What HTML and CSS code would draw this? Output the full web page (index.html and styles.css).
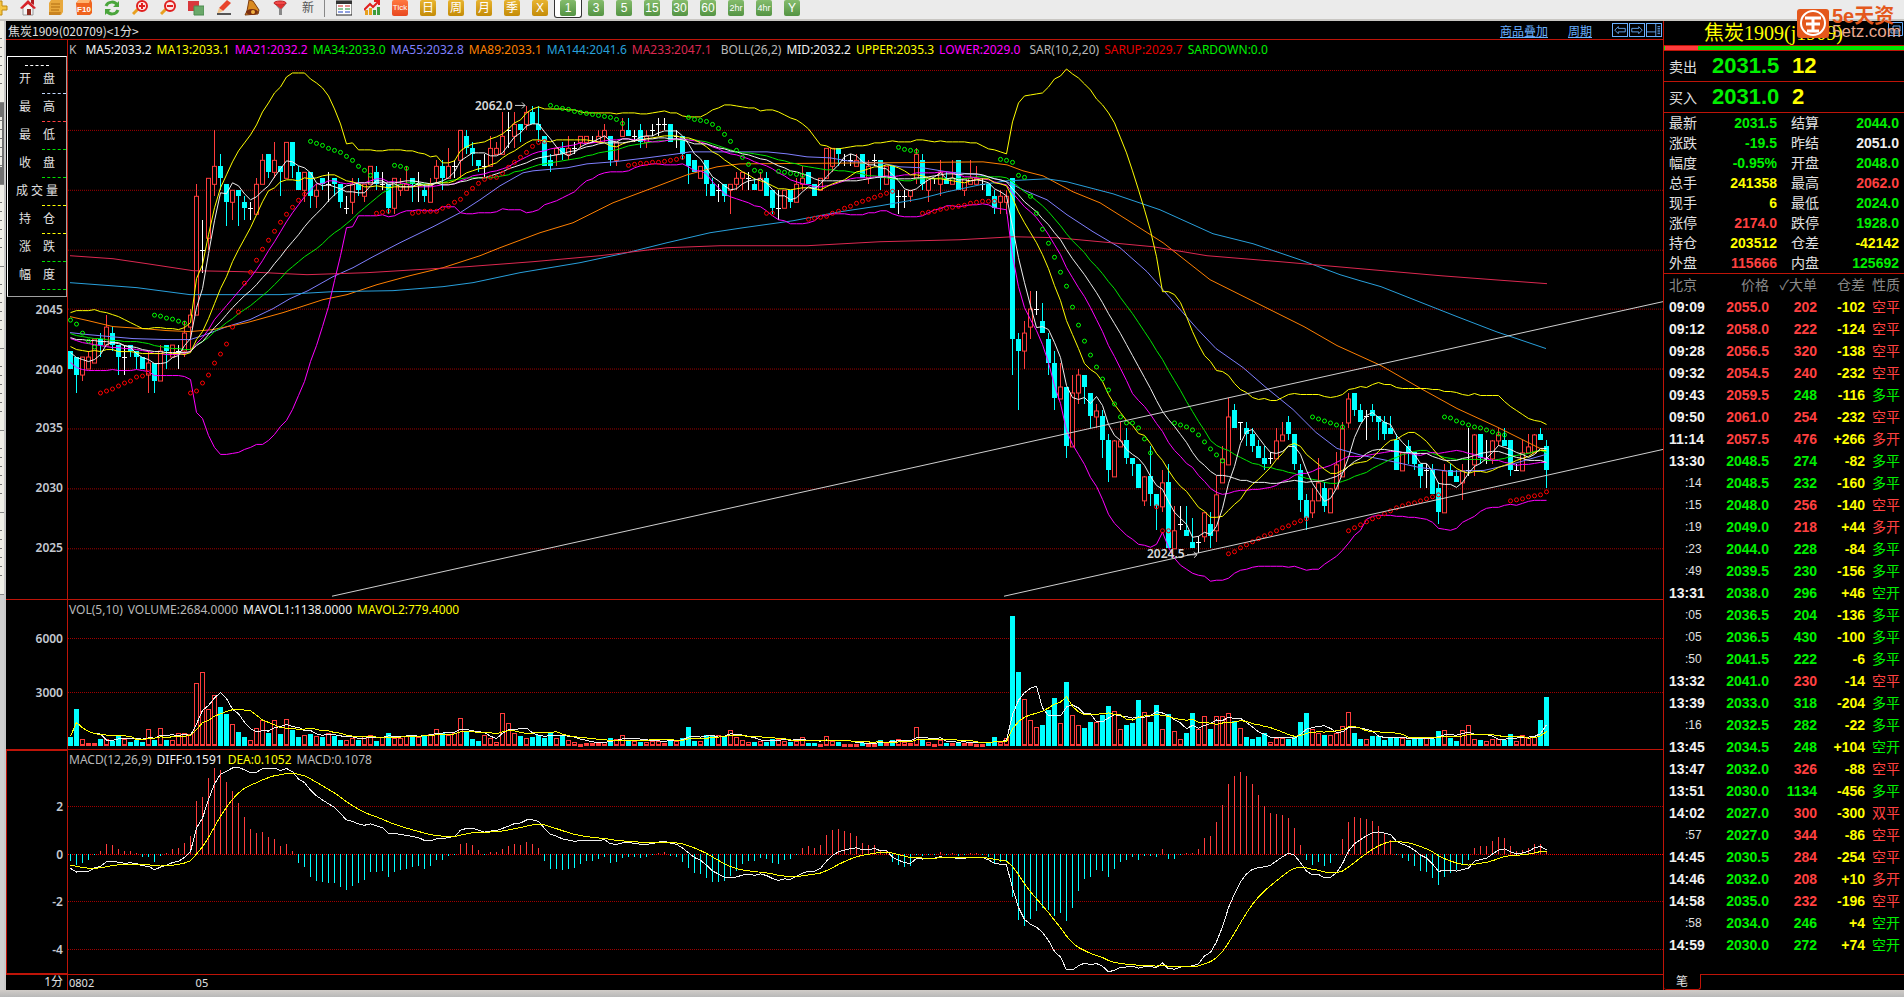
FILE: index.html
```html
<!DOCTYPE html>
<html lang="zh-CN">
<head>
<meta charset="utf-8">
<title>焦炭1909</title>
<link rel="stylesheet" href="styles.css">
</head>

<body>
<div class="toolbar">
  <button aria-label="新增"><svg viewBox="0 0 16 16"><path d="M6 1h4v5h5v4h-5v5H6v-5H1V6h5z" fill="#f5c542" stroke="#c08a10"/></svg></button>
  <button aria-label="首页"><svg viewBox="0 0 16 16"><path d="M3 8v7h10V8L8 3z" fill="#f4f4f4" stroke="#999"/><path d="M0 8l8-8 8 8-2 1-6-5-6 5z" fill="#d8232a"/><path d="M11 0h3v5l-3-2z" fill="#b01c20"/><path d="M7 9h4v6H7z" fill="#8c2b20"/></svg></button>
  <button aria-label="公告"><svg viewBox="0 0 16 16"><path d="M3 0h12v12l-2 3H1V3z" fill="#e8a83c"/><path d="M3 4h9M3 7h9M3 10h8" stroke="#b06c10"/><path d="M1 12h12l-1 3H1z" fill="#c98422"/></svg></button>
  <button aria-label="F10"><svg viewBox="0 0 16 16"><path d="M0 3l3-3h12l1 3v10l-2 2H1z" fill="#f0641e"/><path d="M2 0h12l-1 3H1z" fill="#ffb46e"/><text x="8" y="12" class="f10">F10</text></svg></button>
  <button aria-label="刷新"><svg viewBox="0 0 16 16"><path d="M2 6c2-5 9-5 11-1M14 10c-2 5-9 5-11 1" fill="none" stroke="#4aa53c" stroke-width="3"/><path d="M15 1v6H9zM1 15V9h6z" fill="#4aa53c"/></svg></button>
  <button aria-label="放大"><svg viewBox="0 0 16 16"><path d="M6 9l-5 5" stroke="#e8a020" stroke-width="3"/><circle cx="10" cy="6" r="5" fill="#fde6e6" stroke="#e02020" stroke-width="2"/><path d="M7 6h6M10 3v6" stroke="#e02020" stroke-width="2"/></svg></button>
  <button aria-label="缩小"><svg viewBox="0 0 16 16"><path d="M6 9l-5 5" stroke="#e8a020" stroke-width="3"/><circle cx="10" cy="6" r="5" fill="#fde6e6" stroke="#e02020" stroke-width="2"/><path d="M7 6h6" stroke="#e02020" stroke-width="2"/></svg></button>
  <button aria-label="叠加"><svg viewBox="0 0 16 16"><path d="M0 1h11v10H0z" fill="#d8383c"/><path d="M6 6h10v9H6z" fill="#6aa86a" stroke="#4c8c50"/></svg></button>
  <button aria-label="画线"><svg viewBox="0 0 16 16"><path d="M11 0l4 3-8 8-4-3z" fill="#e8442c"/><path d="M3 8l4 3-6 3z" fill="#f2c48a"/><path d="M1 14h14" stroke="#555" stroke-width="2"/></svg></button>
  <button aria-label="预警"><svg viewBox="0 0 16 16"><path d="M5 0l4 1 6 9-1 4-13 1 2-4z" fill="#d98a20" stroke="#7c3c10"/><ellipse cx="8" cy="12" rx="6" ry="3" fill="#7c3010"/><circle cx="9" cy="12" r="2" fill="#f0b040"/></svg></button>
  <button aria-label="过滤"><svg viewBox="0 0 16 16"><path d="M2 3l5 6v6h3V9l5-6z" fill="#888"/><ellipse cx="8" cy="3" rx="6" ry="2" fill="#f04848" stroke="#c02020"/><path d="M4 5h9L9 9z" fill="#e03030"/></svg></button>
  <button class="new">新</button>
  <i class="split"></i>
  <button aria-label="报价"><svg viewBox="0 0 16 16"><path d="M0 1h16v14H0z" fill="#fff" stroke="#222"/><path d="M0 1h16v3H0z" fill="#333"/><path d="M2 6h5M9 6h5" stroke="#d02020"/><path d="M2 9h5M9 9h5" stroke="#1c8c30"/><path d="M2 12h5M9 12h5" stroke="#2040c0"/></svg></button>
  <button aria-label="走势"><svg viewBox="0 0 16 16"><path d="M1 10h3v5H1zM5 8h3v7H5z" fill="#e8a020"/><path d="M9 10h3v5H9zM13 7h3v8h-3z" fill="#3c9c3c"/><path d="M0 10l6-6 3 3 6-6M10 1h5v4" fill="none" stroke="#e02020" stroke-width="2"/></svg></button>
  <button><b class="tick">Tick</b></button>
  <button><b class="gold">日</b></button>
  <button><b class="gold">周</b></button>
  <button><b class="gold">月</b></button>
  <button><b class="gold">季</b></button>
  <button><b class="gold">X</b></button>
  <button class="on"><b>1</b></button>
  <button><b>3</b></button>
  <button><b>5</b></button>
  <button><b>15</b></button>
  <button><b>30</b></button>
  <button><b>60</b></button>
  <button><b class="hr">2hr</b></button>
  <button><b class="hr">4hr</b></button>
  <button><b>Y</b></button>
</div>

<div class="work">
  <div class="strip"><i></i><i class="cur"></i><i></i><i></i><i></i><i></i><i></i></div>

  <div class="charts">
    <div class="title">
      <span class="name">焦炭1909(020709)&lt;1分&gt;</span>
      <a href="#">商品叠加</a>
      <a href="#">周期</a>
      <div class="arrows">
        <button aria-label="向左"><svg viewBox="0 0 16 14"><path d="M2 7l4-4v2h8v4H6v2z"/></svg></button>
        <button aria-label="向右"><svg viewBox="0 0 16 14"><path d="M14 7l-4-4v2H2v4h8v2z"/></svg></button>
        <button aria-label="布局"><svg viewBox="0 0 16 14"><path d="M0 9h10M10 0v14M12 3h3M12 5h3M12 7h3M12 9h3M12 11h3"/></svg></button>
      </div>
    </div>

    <div class="pane main">
      <div class="axis">
        <svg id="axisK"></svg>
        <div class="info">
          <p class="top"><u class="w"></u></p>
          <p>开　盘<u class="b"></u></p>
          <p>最　高<u class="r"></u></p>
          <p>最　低<u class="g"></u></p>
          <p>收　盘<u class="g"></u></p>
          <p>成 交 量<u class="y"></u></p>
          <p>持　仓<u class="y"></u></p>
          <p>涨　跌<u class="g"></u></p>
          <p>幅　度<u class="g"></u></p>
        </div>
      </div>
      <div class="plot">
        <div class="legend">
          <span class="gray k">K</span><span class="white">MA5:2033.2</span><span class="yellow">MA13:2033.1</span><span class="magenta">MA21:2032.2</span><span class="green">MA34:2033.0</span><span class="violet">MA55:2032.8</span><span class="orange">MA89:2033.1</span><span class="blue">MA144:2041.6</span><span class="crimson">MA233:2047.1</span>
          <span class="gray group">BOLL(26,2)</span><span class="white">MID:2032.2</span><span class="yellow">UPPER:2035.3</span><span class="magenta">LOWER:2029.0</span>
          <span class="gray group">SAR(10,2,20)</span><span class="red">SARUP:2029.7</span><span class="green">SARDOWN:0.0</span>
        </div>
        <svg id="plotK" viewBox="68 60 1595 540" preserveAspectRatio="none"></svg>
      </div>
    </div>

    <div class="pane vol">
      <div class="axis"><svg id="axisV"></svg></div>
      <div class="plot">
        <div class="legend"><span class="gray">VOL(5,10)</span><span class="gray">VOLUME:2684.0000</span><span class="white">MAVOL1:1138.0000</span><span class="yellow">MAVOL2:779.4000</span></div>
        <svg id="plotV" viewBox="68 621 1595 128" preserveAspectRatio="none"></svg>
      </div>
    </div>

    <div class="pane macd">
      <div class="axis"><svg id="axisM"></svg></div>
      <div class="plot">
        <div class="legend"><span class="gray">MACD(12,26,9)</span><span class="white">DIFF:0.1591</span><span class="yellow">DEA:0.1052</span><span class="gray">MACD:0.1078</span></div>
        <svg id="plotM" viewBox="68 770 1595 204" preserveAspectRatio="none"></svg>
      </div>
    </div>

    <div class="pane time">
      <div class="axis">1分</div>
      <svg class="days"><text x="1" y="12">0802</text><text x="8%" y="12">05</text></svg>
    </div>
  </div>

  <div class="side">
    <h1>焦炭1909(j1909)</h1>
    <div class="ratio"><i></i></div>
    <div class="deal"><span>卖出</span><b class="green">2031.5</b><b class="yellow">12</b></div>
    <div class="deal"><span>买入</span><b class="green">2031.0</b><b class="yellow">2</b></div>
    <table class="quote">
      <tr><th>最新</th><td class="green">2031.5</td><th>结算</th><td class="green">2044.0</td></tr>
      <tr><th>涨跌</th><td class="green">-19.5</td><th>昨结</th><td class="white">2051.0</td></tr>
      <tr><th>幅度</th><td class="green">-0.95%</td><th>开盘</th><td class="green">2048.0</td></tr>
      <tr><th>总手</th><td class="yellow">241358</td><th>最高</th><td class="up">2062.0</td></tr>
      <tr><th>现手</th><td class="yellow">6</td><th>最低</th><td class="green">2024.0</td></tr>
      <tr><th>涨停</th><td class="up">2174.0</td><th>跌停</th><td class="green">1928.0</td></tr>
      <tr><th>持仓</th><td class="yellow">203512</td><th>仓差</th><td class="yellow">-42142</td></tr>
      <tr><th>外盘</th><td class="up">115666</td><th>内盘</th><td class="green">125692</td></tr>
    </table>
    <table class="ticks">
      <thead><tr><th>北京</th><th>价格</th><th>✓大单</th><th>仓差</th><th>性质</th></tr></thead>
      <tbody id="ticks"></tbody>
    </table>
    <div class="tabs"><button>笔</button><i></i></div>
  </div>
</div>
<div class="bottom"></div>

<button class="restore" aria-label="还原"><svg viewBox="0 0 15 14"><path d="M0.5 0.5h14v13h-14zM5 4h7v5H5zM3 6v5h7"/></svg></button>
<div class="logo">
  <svg viewBox="0 0 32 29"><rect width="32" height="29" rx="3" fill="#e4581c"/><circle cx="16" cy="14" r="12" fill="none" stroke="#fff" stroke-width="2"/><path d="M8 9h16M9 15h14M16 9v13M10 22h12" stroke="#fff" stroke-width="3" fill="none"/></svg>
  <div><b>5e天资</b><span>5etz.com</span></div>
</div>

<script src="chart.js"></script>
</body>
</html>
```
FILE: styles.css
```css
* {
  box-sizing: border-box;
}
body {
  margin: 0;
  height: 100vh;
  display: flex;
  flex-direction: column;
  overflow: hidden;
  background: #000;
  color: #e0e0e0;
  font: 12px "Noto Sans", "Noto Sans CJK SC", sans-serif;
}
button {
  padding: 0;
  border: 0;
  background: none;
  font: inherit;
  color: inherit;
}
svg {
  display: block;
}

.gray { color: #b8b8b8; }
.white { color: #f0f0f0; }
.yellow { color: #ffff00; }
.magenta { color: #ff00ff; }
.green { color: #00f000; }
.violet { color: #8080ff; }
.orange { color: #ff8000; }
.blue { color: #28a0dc; }
.crimson { color: #dc2850; }
.red { color: #e80000; }
.up { color: #ff4040; }

.toolbar {
  display: flex;
  height: 21px;
  padding-bottom: 2px;
  margin-left: -14px;
  background: #ebebeb;
  border-bottom: 2px solid #c8c6c2;
  flex: none;
}
.toolbar button {
  width: 28px;
  height: 18px;
  flex: none;
  display: flex;
  justify-content: center;
}
.toolbar svg {
  width: 16px;
  height: 16px;
}
.toolbar .f10 {
  font: bold 8px "Liberation Sans", sans-serif;
  fill: #fff;
  text-anchor: middle;
}
.toolbar b {
  width: 16px;
  height: 16px;
  border-radius: 2px;
  background: linear-gradient(#84bc6c, #549444);
  color: #fff;
  font: 12px/16px "Liberation Sans", "Noto Sans CJK SC", sans-serif;
  text-align: center;
}
.toolbar .gold { background: linear-gradient(#e8b430, #c48c08); }
.toolbar .tick { background: linear-gradient(#ff7840, #e84820); font-size: 8px; }
.toolbar .hr { font-size: 9px; }
.toolbar .new { color: #555; line-height: 16px; }
.toolbar .on {
  background: #fff;
  border: 1px solid #333;
  border-top: 0;
  border-radius: 0 0 3px 3px;
}
.split {
  width: 8px;
  border-left: 1px solid #888;
  flex: none;
  margin-left: 2px;
  margin-right: -2px;
}

.work {
  flex: 1;
  min-height: 0;
  display: grid;
  grid-template-columns: 6px 1fr 240px;
  grid-template-rows: minmax(0, 1fr);
}
.strip {
  background: #d0d0d0;
  border-right: 2px solid #c8c8c8;
}
.strip i {
  display: block;
  height: 82px;
  background: repeating-linear-gradient(#f0efe8 0 3px, #777 3px 4px, #f0efe8 4px 9px) no-repeat 0 14px / 2px 50px #f0efe8;
  border-bottom: 1px solid #888;
}
.strip .cur {
  background-color: #707070;
}

.charts {
  display: flex;
  flex-direction: column;
  border-right: 1px solid #be1408;
}
.title {
  height: 19px;
  flex: none;
  display: flex;
  align-items: center;
  gap: 20px;
  padding: 0 1px 0 2px;
  border-bottom: 1px solid #be1408;
  font-family: "Noto Sans CJK SC", sans-serif;
}
.title .name {
  margin-right: auto;
}
.title a {
  color: #6ab0ff;
}
.arrows {
  display: flex;
  gap: 1px;
}
.arrows button {
  width: 16px;
  height: 14px;
  border: 1px solid #6ab0ff;
}
.arrows path, .restore path {
  fill: none;
  stroke: #6ab0ff;
}

.pane {
  display: grid;
  grid-template-columns: 62px 1fr;
  grid-template-rows: minmax(0, 1fr);
  min-height: 0;
  border-bottom: 1px solid #be1408;
}
.main { flex: 561; }
.vol { flex: 149; }
.macd { flex: 225; }
.time { flex: none; height: 15px; border: 0; }
.axis {
  position: relative;
  display: flex;
  min-height: 0;
  padding-top: 20px;
  border-right: 1px solid #be1408;
}
.axis svg {
  flex: 1;
  height: 100%;
  overflow: visible;
}
.axis text {
  font-weight: 600;
  fill: #c4c8d0;
  text-anchor: end;
}
.macd .axis {
  outline: 1px solid #be1408;
  outline-offset: -1px;
}
.time .axis {
  padding: 0 4px 0 0;
  justify-content: flex-end;
  line-height: 14px;
}
.days {
  width: 100%;
  height: 15px;
  fill: #e0e0e0;
  font-size: 11px;
}
.plot {
  display: flex;
  flex-direction: column;
  min-width: 0;
  min-height: 0;
}
.plot svg {
  flex: 1;
  width: 100%;
  min-height: 0;
  overflow: visible;
  shape-rendering: crispEdges;
}
.plot text {
  font-weight: 600;
  fill: #d8d8d8;
}
.legend {
  height: 20px;
  flex: none;
  line-height: 20px;
  padding-left: 1px;
  display: flex;
  gap: 5px;
  white-space: nowrap;
}
.legend .k { margin-right: 4px; }
.legend .group { margin-left: 4px; }

/* floating data window */
.info {
  position: absolute;
  left: 1px;
  top: 16px;
  width: 60px;
  border: 1px solid #a0a0a0;
  border-left-color: #fff;
  border-top-color: #fff;
  padding-bottom: 6px;
}
.info p {
  position: relative;
  margin: 0;
  height: 28px;
  line-height: 26px;
  text-align: center;
}
.info .top { height: 9px; }
.info u {
  position: absolute;
  right: 0;
  bottom: 0;
  width: 24px;
  border-bottom: 1px dashed;
}
.info .top u { right: 17px; }
.info .w { color: #fff; }
.info .b { color: #c0d8ff; }
.info .r { color: #ff4040; }
.info .g { color: #00e000; }
.info .y { color: #ffff00; }

.side {
  display: flex;
  flex-direction: column;
  font: 14px "Liberation Sans", "Noto Sans CJK SC", sans-serif;
}
.side h1 {
  margin: 0;
  height: 24px;
  padding-left: 40px;
  font: 20px/24px "Liberation Serif", "Noto Sans CJK SC", serif;
  color: #ff0;
  white-space: nowrap;
}
.ratio {
  height: 6px;
  padding: 0 1px;
  border: solid #be1408;
  border-width: 1px 0;
  background: #00e800;
}
.ratio i {
  display: block;
  width: 14%;
  height: 4px;
  background: #ff3c3c;
}
.deal {
  height: 31px;
  display: grid;
  grid-template-columns: 43px 80px 1fr;
  align-items: center;
  padding-left: 5px;
  border-bottom: 1px solid #be1408;
}
.deal b {
  font-size: 22px;
}
table {
  border-spacing: 0;
  table-layout: fixed;
}
td, th {
  padding: 0;
  font-weight: bold;
  text-align: right;
  line-height: 20px;
  white-space: nowrap;
}
th {
  font-weight: normal;
  text-align: left;
}
.quote {
  width: 100%;
  padding: 0 5px;
  border-bottom: 1px solid #be1408;
}
.quote th {
  width: 28px;
}
.quote td {
  width: 80px;
}
.quote th:nth-child(3) {
  width: 42px;
  padding-left: 14px;
}
.quote tr {
  height: 20px;
}
.ticks {
  width: 100%;
  padding: 0 4px 0 5px;
}
.ticks tr {
  height: 22px;
}
.ticks th {
  color: #888;
  text-align: right;
}
.ticks td:first-child, .ticks th:first-child {
  text-align: left;
  width: 40px;
}
.ticks th:nth-child(2) { width: 60px; }
.ticks th:nth-child(3) { width: 48px; }
.ticks th:nth-child(4) { width: 48px; }
.ticks td:last-child { font-weight: normal; }
.ticks td.sec {
  padding-left: 16px;
  font-size: 12px;
  font-weight: normal;
}
.tabs {
  margin-top: auto;
  height: 16px;
  display: flex;
}
.tabs button {
  width: 37px;
  font-size: 12px;
  line-height: 14px;
  border: 1px solid #be1408;
  border-width: 0 1px 1px 0;
  border-radius: 0 0 3px 3px;
}
.tabs i {
  flex: 1;
  border-top: 1px solid #be1408;
}
.bottom {
  height: 7px;
  flex: none;
  background: linear-gradient(#d0ccc8, #b8b8b8);
}

.restore {
  position: absolute;
  right: 1px;
  top: 22px;
}
.restore svg {
  width: 15px;
  height: 14px;
}
.logo {
  position: absolute;
  right: 4px;
  top: 9px;
  display: flex;
  gap: 3px;
  color: #e4581c;
}
.logo svg {
  width: 32px;
  height: 29px;
}
.logo div {
  display: flex;
  flex-direction: column;
  width: 68px;
  font: 17px/15px "Liberation Sans", "Noto Sans CJK SC", sans-serif;
}
.logo b {
  font-size: 20px;
  white-space: nowrap;
}
.logo span {
  color: #e8a890;
}
```
FILE: chart.js
```js
// open close high low, in half points above 2020
var bars = ("43 40 43 40,42 39 42 36,39 42 42 38,40 42 43 40,41 45 45 41,45 44 46 42,44 47 49 44,46 44 47 43,44 42 44 39,42 42 44 39," +
"44 43 44 42,43 42 43 40,42 40 42 40,39 41 43 36,41 38 41 36,38 43 44 38,44 43 44 40,42 44 44 42,43 43 44 40,43 46 48 42," +
"47 49 50 43,49 69 71 49,60 60 65 56,62 72 72 60,71 74 80 69,74 72 76 70,71 68 71 64,68 70 70 65,70 69 70 64,68 67 69 65," +
"67 67 68 65,66 71 72 66,71 75 76 71,76 73 76 72,73 75 78 72,74 73 74 69,72 78 78 72,78 74 78 72,73 70 74 70,70 73 73 68," +
"73 69 73 67,69 70 71 67,72 71 72 70,71 71 73 68,72 71 72 69,71 68 71 67,67 67 69 66,68 71 72 66,71 70 72 69,69 71 71 68," +
"71 74 74 71,73 71 74 70,71 71 73 70,71 67 71 66,67 72 72 66,70 71 72 69,70 71 74 70,72 71 72 68,71 71 73 68,70 69 71 68," +
"68 71 72 68,72 74 75 71,74 72 75 70,72 74 77 72,74 74 75 72,75 80 80 72,79 77 80 76,77 76 78 74,75 74 75 73,74 74 76 72," +
"74 77 79 74,76 77 78 76,76 79 83 76,80 80 83 77,79 81 83 77,81 80 81 78,81 83 84 80,83 81 84 81,81 80 84 78,79 74 79 74," +
"75 74 76 73,76 77 77 74,77 76 78 75,76 77 79 75,77 77 78 76,78 79 79 77,78 79 79 78,78 78 79 78,78 79 80 78,79 80 81 78," +
"79 75 79 74,75 78 78 74,79 80 82 79,80 79 82 79,79 79 80 78,80 78 81 77,78 79 80 77,80 80 81 79,81 81 82 79,81 81 82 80," +
"81 78 81 78,79 79 80 77,79 76 79 75,76 74 76 71,75 73 75 73,72 74 74 72,75 71 75 69,71 69 72 69,70 70 71 68,71 69 71 68," +
"70 71 71 66,71 72 73 70,72 73 73 70,72 72 73 70,71 70 72 70,70 72 73 70,72 69 73 69,70 67 70 66,67 67 70 65,67 70 70 67," +
"70 68 70 67,68 71 72 68,71 72 74 70,73 71 73 71,71 69 71 69,70 72 72 70,72 77 77 72,74 77 77 73,77 76 77 74,75 75 76 74," +
"75 75 76 74,74 75 76 74,76 72 76 72,72 74 75 71,75 75 76 74,75 72 75 70,71 74 74 71,74 67 74 67,69 69 70 66,69 69 70 67," +
"69 70 70 68,72 76 77 71,75 71 76 70,70 72 72 68,72 72 72 71,71 73 75 69,72 71 73 71,71 72 75 71,75 70 75 70,70 72 72 69," +
"71 72 75 71,71 72 74 71,71 71 72 70,71 69 71 69,69 67 70 66,68 69 70 66,68 69 70 66,72 45 72 39,45 43 46 33,43 46 48 40," +
"47 50 53 45,50 50 53 49,48 46 51 46,45 41 46 39,41 35 43 33,35 37 41 35,37 27 37 25,27 36 39 27,36 39 40 34,39 37 39 34," +
"36 32 36 30,32 33 34 30,32 28 33 25,28 23 29 21,22 28 28 22,27 28 31 27,28 25 30 24,25 24 25 22,24 20 24 20,18 22 22 17," +
"22 19 27 17,19 17 19 13,17 21 23 16,21 10 24 10,10 13 17 10,14 14 17 13,13 12 17 12,11 10 15 10,11 11 12 9,12 16 16 11," +
"14 12 16 10,13 19 22 11,21 25 27 21,24 32 35 24,33 30 34 30,31 31 31 28,30 29 31 27,29 27 30 26,27 25 28 25,25 24 27 23," +
"25 25 26 24,25 28 30 25,28 29 31 28,31 29 32 28,29 24 29 23,23 18 24 16,18 15 19 13,16 18 20 15,18 21 25 18,20 17 21 16," +
"16 20 20 16,20 24 26 20,22 30 31 22,31 35 36 30,36 33 36 32,33 31 34 31,32 32 33 28,33 32 34 31,32 31 32 28,31 29 32 28," +
"30 29 32 29,28 23 29 23,23 26 26 23,27 26 28 24,26 24 26 23,24 22 24 20,23 23 24 20,23 19 24 19,20 16 21 14,16 23 24 16," +
"23 22 24 22,22 21 23 21,21 23 24 18,23 23 30 22,24 29 29 22,29 25 29 24,25 25 28 24,25 28 28 24,28 29 30 27,28 27 30 27," +
"28 23 28 22,23 23 24 23,23 26 28 23,26 27 29 26,26 29 29 26,29 28 30 28,27 23 28 20").split(",").map(function(s) {
    var v = s.split(" ").map(Number);
    return { o: v[0], c: v[1], h: v[2], l: v[3] };
});

// volume bar heights
var vols = [8,36,6,2,2,6,6,4,10,6,3,5,3,16,5,17,5,5,12,12,11,62,73,36,50,38,31,21,13,8,5,17,25,12,25,11,26,15,8,10,11,9,8,12,9,5,5,7,5,9,10,4,8,12,7,7,9,10,8,10,11,16,12,10,12,27,14,6,4,10,7,3,32,22,12,9,7,8,10,7,12,7,10,5,3,1,2,2,2,3,7,6,10,4,4,3,3,4,4,2,6,4,7,18,4,4,10,9,10,9,15,8,5,3,3,4,3,6,6,4,3,4,8,2,2,1,9,4,3,1,1,1,2,1,1,5,2,5,6,3,2,18,6,3,1,5,2,2,2,2,2,1,1,2,8,3,7,129,73,46,25,18,20,35,47,22,63,30,20,17,23,23,30,39,34,16,20,22,45,33,23,40,16,31,14,6,12,32,16,29,16,29,29,32,24,17,8,6,8,12,3,7,7,6,8,23,32,16,12,10,10,12,19,33,12,6,6,9,9,5,7,7,7,5,6,6,7,6,14,15,7,4,15,20,6,5,4,6,6,5,11,4,10,7,8,25,48];

var before = [48.6,48.6,48.6,48.6,48.6,48.6,48.6,48.6,44.8,44.8,44.8,44.8,44.8,47.9,47.9,47.9,47.9,47.9,47.9,47.9,47.9,44.3,44.3,44.3,44.3,44.3,44.3,44.3,44.3,44.3,43.3,43.3,43.3,43.3];

var longMA = [
    ["#8080ff", "70,333 88,335 110,337 133,339 167,340 190,340 203,336 227,327 250,320 273,309 290,299 308,291 333,277 353,268 373,257 400,243 433,227 460,213 480,200 500,186 523,173 533,171 567,168 587,164 613,162 647,158 677,154 690,152 767,152 787,154 807,157 830,158 853,162 880,163 900,167 923,168 947,172 980,175 1007,182 1023,190 1047,200 1067,215 1093,232 1120,248 1147,272 1170,298 1182,312 1197,329 1216,349 1243,368 1266,388 1293,410 1316,433 1337,449 1362,456 1392,462 1419,468 1450,472 1484,471 1511,465 1546,455"],
    ["#ff8000", "70,317 88,321 113,327 143,329 167,331 190,332 213,330 247,323 283,313 323,300 347,295 377,285 410,276 443,268 480,256 500,248 540,233 573,223 613,203 653,188 687,175 717,167 740,164 880,163 983,162 1007,165 1023,171 1043,176 1073,192 1100,203 1127,220 1163,243 1210,280 1250,300 1304,327 1337,346 1381,366 1419,388 1457,409 1496,427 1546,452"],
    ["#28a0dc", "70,283 137,288 190,295 280,295 333,292 393,291 443,287 473,283 520,273 580,263 627,253 667,243 710,233 743,228 793,221 840,212 880,206 920,199 947,192 980,185 1007,181 1047,179 1067,182 1113,194 1160,210 1213,234 1253,244 1300,260 1340,275 1360,281 1381,287 1419,302 1457,317 1496,332 1546,349"],
    ["#dc2850", "70,256 113,259 147,264 193,271 243,272 307,275 367,273 400,271 467,267 533,262 600,256 667,248 720,246 807,246 880,242 960,240 1013,237 1057,238 1100,242 1153,247 1207,256 1280,262 1360,269 1440,276 1493,280 1547,284"]
];

// first bar, then y of each dot
var sarDown = [
    [0,320,324,333,341,347],
    [14,315,316,318,319,321,323],
    [40,141,143,145,148,150,152,156,160,166,170,175],
    [54,165,166,168],
    [80,105,107,108,109,111,112,113,114,115,116,117,119,123],
    [103,117,119,120,121,124,128,134,141,150,157,164,170,171],
    [118,171,172,173,174,175],
    [138,147,149,150,151],
    [155,159,160,162,175,177,196,213,229,243,257,272,286,307,325,341,355,367,379,390,404,417,423,423,428,439,453],
    [184,423,425,427,430,435,442,449,455,461],
    [207,417,419,421,423,425,427],
    [229,417,418,421,423,425,427,428,430,432,434,435]
];
var sarUp = [
    [5,393,391,389,386,383,381,377,376,372],
    [20,393,391,383,375,363,354,344,327,312,283,272,260,249,240,231,222,214,207,200,194],
    [51,213,212,211],
    [57,213,212,211,211,211,208,206,202,199,193,188,183,179,177,177,173,167,162,157,152,146,142,141],
    [93,165,164,163,163,162,162,161,160,159,157],
    [116,213,213],
    [123,219,218,217,216,213,211,208,206,203,201,199,197,195,193,191],
    [142,213,212,211,209,208,207,206,205,203,202,201,201,201],
    [181,507,531,531],
    [193,554,552,548,545,542,539,536,534,531,528,526,523,521,519],
    [213,531,528,525,522,519,517,514,511,508,506,504,503,501,499,497,495],
    [240,501,500,499,497,496,495,492]
];

function X(i) { return 70 + 6 * i; }
function Y(t) { return Math.round(548.5 - (t - 10) * 5.98); }
function YM(v) { return 854 - v * 23.8; }

function rect(x, y, w, h, fill) {
    return '<rect x="' + x + '" y="' + y + '" width="' + w + '" height="' + h + '" fill="' + fill + '"/>';
}
function box(x, y, w, h) {
    return '<rect x="' + (x + 0.5) + '" y="' + (y + 0.5) + '" width="' + (w - 1) + '" height="' + Math.max(h - 1, 1) + '" fill="#000" stroke="#ff3c3c"/>';
}
function line(points, color) {
    return '<polyline points="' + points + '" fill="none" stroke="' + color + '"/>';
}
function grid(y, color) {
    return '<path d="M68 ' + (y + 0.5) + 'H1663" stroke="' + (color || "#a00000") + '" stroke-dasharray="1 1"/>';
}
function curve(vals, f, color) {
    return line(vals.map(function(v, i) { return (X(i) + 0.5) + "," + f(v).toFixed(1); }).join(" "), color);
}
function average(list, n, skip) {
    var out = [];
    for (var i = skip; i < list.length; i++) {
        var part = list.slice(Math.max(0, i - n + 1), i + 1);
        out.push(part.reduce(function(a, b) { return a + b; }, 0) / part.length);
    }
    return out;
}
function axis(id, top, height, labels) {
    document.getElementById(id).innerHTML = labels.map(function(d) {
        return '<text x="57" y="' + ((d[1] - top) / height * 100) + '%" dy="5">' + d[0] + '</text>';
    }).join("");
}

function drawK() {
    var s = "";
    for (var t = 10; t <= 90; t += 10) s += grid(Y(t));
    bars.forEach(function(b, i) {
        var x = X(i), top = Y(Math.max(b.o, b.c)), bot = Y(Math.min(b.o, b.c));
        var color = b.c > b.o ? "#ff3c3c" : b.c < b.o ? "#00ffff" : "#ffffff";
        s += rect(x, Y(b.h), 1, Math.max(Y(b.l) - Y(b.h), 1), color);
        if (b.c > b.o) s += box(x - 2, top, 5, bot - top + 1);
        else if (b.c < b.o) s += rect(x - 2, top, 5, bot - top, color);
        else s += rect(x - 2, top, 5, 1, color);
    });
    var closes = before.concat(bars.map(function(b) { return b.c; }));
    var n = before.length;
    longMA.forEach(function(m) { s += line(m[1], m[0]); });
    s += curve(average(closes, 34, n), Y, "#00e800");
    s += curve(average(closes, 21, n), Y, "#ff00ff");
    s += curve(average(closes, 13, n), Y, "#ffff00");
    s += curve(average(closes, 5, n), Y, "#f0f0f0");
    var mid = average(closes, 26, n);
    var dev = mid.map(function(m, i) {
        var sum = 0;
        for (var k = i + n - 25; k <= i + n; k++) sum += (closes[k] - m) * (closes[k] - m);
        return 2 * Math.sqrt(sum / 25);
    });
    s += curve(mid, Y, "#f0f0f0");
    s += curve(mid.map(function(m, i) { return m + dev[i]; }), Y, "#ffff00");
    s += curve(mid.map(function(m, i) { return m - dev[i]; }), Y, "#ff00ff");
    [[sarDown, "#00ff00"], [sarUp, "#ff0000"]].forEach(function(set) {
        set[0].forEach(function(seg) {
            for (var k = 1; k < seg.length; k++)
                s += '<circle cx="' + (X(seg[0] + k - 1) + 0.5) + '" cy="' + (seg[k] + 0.5) + '" r="2" fill="none" stroke="' + set[1] + '"/>';
        });
    });
    s += line("332,597 1663,302", "#d0d0d0") + line("1004,597 1663,450", "#d0d0d0");
    s += '<text x="475" y="110">2062.0</text><path d="M515 105.5h10m-3 -3l3 3l-3 3" fill="none" stroke="#d0d0d0"/>';
    s += '<text x="1147" y="559">2024.5</text><path d="M1187 555.5h10m-3 -3l3 3l-3 3" fill="none" stroke="#d0d0d0"/>';
    document.getElementById("plotK").innerHTML = s;
    axis("axisK", 60, 540, [[2045, 309], [2040, 369], [2035, 428], [2030, 488], [2025, 548]]);
}

function drawV() {
    var s = grid(639) + grid(693);
    vols.forEach(function(h, i) {
        if (bars[i].c < bars[i].o) s += rect(X(i) - 2, 746 - h, 5, h, "#00ffff");
        else s += box(X(i) - 2, 746 - h, 5, h);
    });
    function f(h) { return 745 - h; }
    s += curve(average(vols, 5, 0), f, "#f0f0f0") + curve(average(vols, 10, 0), f, "#ffff00");
    document.getElementById("plotV").innerHTML = s;
    axis("axisV", 621, 128, [[6000, 639], [3000, 693]]);
}

function drawM() {
    var s = grid(806) + grid(901) + grid(949) + grid(854, "#ff0000");
    var fast = 44.6, slow = 45.5, dea = -0.42, diffs = [], deas = [];
    bars.forEach(function(b, i) {
        fast += (b.c - fast) * 2 / 13;
        slow += (b.c - slow) * 2 / 27;
        var diff = (fast - slow) / 2;
        dea += (diff - dea) / 5;
        diffs.push(diff);
        deas.push(dea);
        var y = Math.round(YM(2 * (diff - dea)));
        if (y < 854) s += rect(X(i), y, 1, 854 - y, "#ff3c3c");
        else s += rect(X(i), 854, 1, Math.max(y - 854, 1), "#00ffff");
    });
    s += curve(diffs, YM, "#f0f0f0") + curve(deas, YM, "#ffff00");
    document.getElementById("plotM").innerHTML = s;
    axis("axisM", 770, 204, [[2, 806], [0, 854], [-2, 901], [-4, 949]]);
}

// time, price, lots, change, type; r/g is the colour of price and of lots
var ticks = [
    "09:09 2055.0r 202r -102 空平", "09:12 2058.0r 222r -124 空平", "09:28 2056.5r 320r -138 空平",
    "09:32 2054.5r 240r -232 空平", "09:43 2059.5r 248g -116 多平", "09:50 2061.0r 254r -232 空平",
    "11:14 2057.5r 476r +266 多开", "13:30 2048.5g 274g -82 多平", ":14 2048.5g 232g -160 多平",
    ":15 2048.0g 256r -140 空平", ":19 2049.0g 218r +44 多开", ":23 2044.0g 228g -84 多平",
    ":49 2039.5g 230g -156 多平", "13:31 2038.0g 296g +46 空开", ":05 2036.5g 204g -136 多平",
    ":05 2036.5g 430g -100 多平", ":50 2041.5g 222g -6 多平", "13:32 2041.0g 230r -14 空平",
    "13:39 2033.0g 318g -204 多平", ":16 2032.5g 282g -22 多平", "13:45 2034.5g 248g +104 空开",
    "13:47 2032.0g 326r -88 空平", "13:51 2030.0g 1134g -456 多平", "14:02 2027.0g 300r -300 双平",
    ":57 2027.0g 344r -86 空平", "14:45 2030.5g 284r -254 空平", "14:46 2032.0g 208r +10 多开",
    "14:58 2035.0g 232r -196 空平", ":58 2034.0g 246g +4 空开", "14:59 2030.0g 272g +74 空开"
];

function cell(v, c) {
    return '<td class="' + (c == "r" ? "up" : "green") + '">' + v + '</td>';
}
function drawTicks() {
    document.getElementById("ticks").innerHTML = ticks.map(function(t) {
        var v = t.split(" "), p = v[1], q = v[2], c = q.slice(-1);
        return '<tr><td class="' + (v[0][0] == ":" ? "sec" : "white") + '">' + v[0] + '</td>' +
            cell(p.slice(0, -1), p.slice(-1)) + cell(q.slice(0, -1), c) +
            '<td class="yellow">' + v[3] + '</td>' + cell(v[4], c) + '</tr>';
    }).join("");
}

drawK();
drawV();
drawM();
drawTicks();
```
